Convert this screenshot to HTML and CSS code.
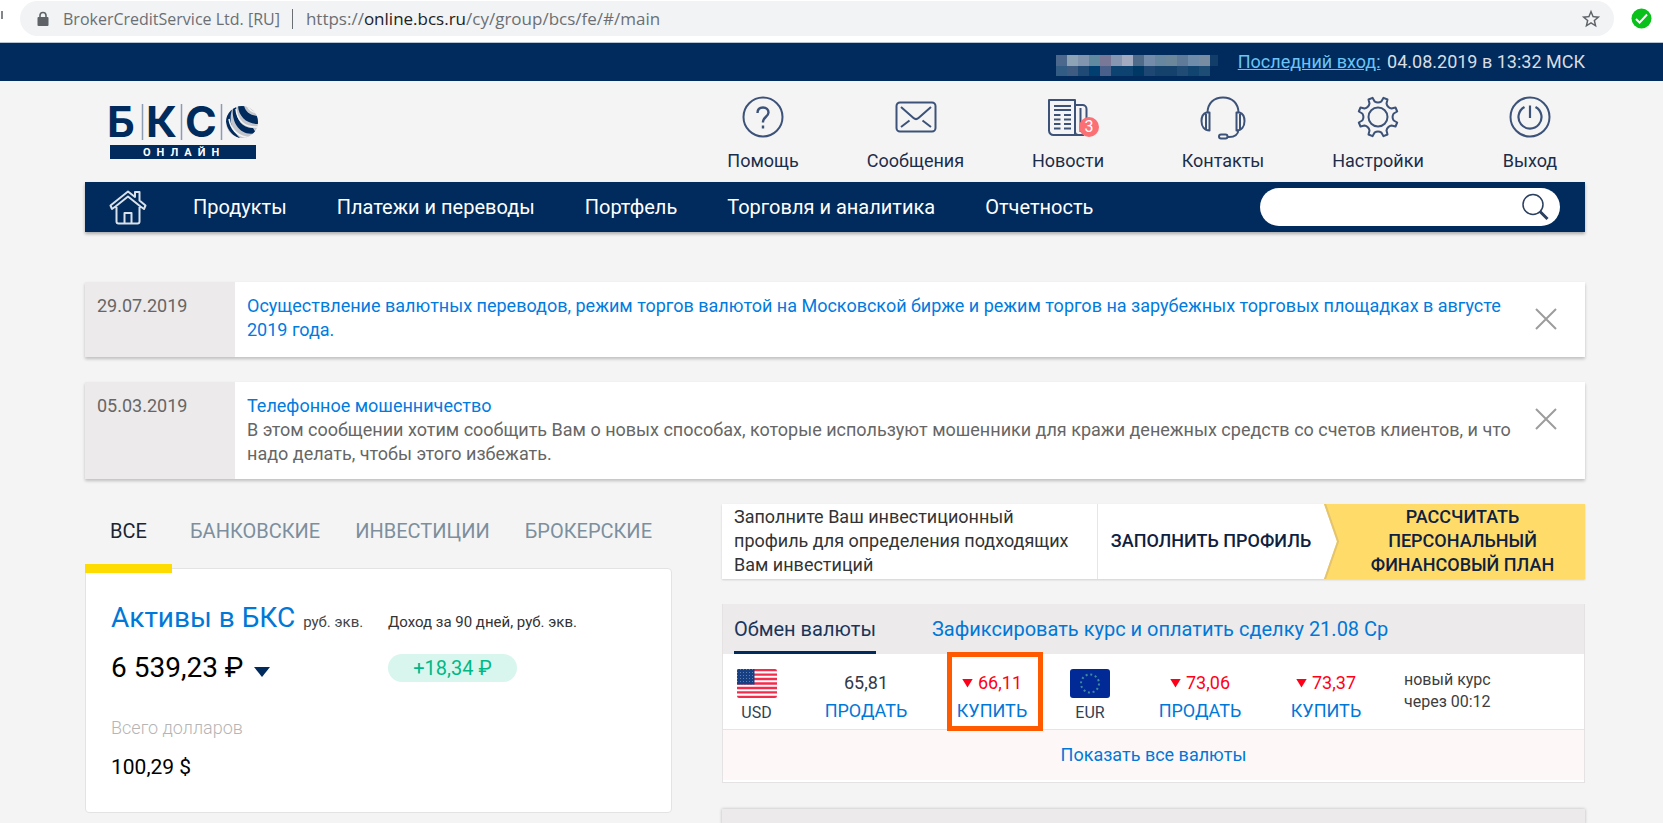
FILE: index.html
```html
<!DOCTYPE html>
<html lang="ru">
<head>
<meta charset="utf-8">
<title>БКС Онлайн</title>
<link rel="stylesheet" href="styles.css">
</head>
<body>
<div class="browser">
  <span class="browser-reload"></span>
  <div class="omnibox">
    <svg class="lock" viewBox="0 0 12 16" width="12" height="16" aria-hidden="true"><path d="M3 7V4.500a3 3 0 0 1 6 0V7" fill="none" stroke="#5f6368" stroke-width="1.600"/><rect x="0.500" y="6" width="11" height="9" rx="1" fill="#5f6368"/></svg>
    <span class="owner">BrokerCreditService Ltd. [RU]</span>
    <span class="divider"></span>
    <span class="url">https://<b>online.bcs.ru</b>/cy/group/bcs/fe/#/main</span>
    <svg class="star" viewBox="0 0 24 24" width="22" height="22" aria-hidden="true"><path d="M22 9.240l-7.190-.62L12 2 9.190 8.630 2 9.240l5.460 4.730L5.820 21 12 17.270 18.180 21l-1.630-7.030L22 9.240zM12 15.400l-3.760 2.270 1-4.280-3.320-2.880 4.380-.38L12 6.100l1.710 4.040 4.380.38-3.320 2.880 1 4.280L12 15.400z" fill="#5f6368"/></svg>
  </div>
  <svg class="shield" viewBox="0 0 21 21" width="21" height="21" aria-hidden="true"><circle cx="10.500" cy="10.500" r="10" fill="#0ac11c"/><path d="M5 11l3.600 3.600L16 6.500" fill="none" stroke="#fff" stroke-width="2"/></svg>
</div>

<div class="topbar">
  <div class="wrap topbar-row">
    <svg class="mosaic" viewBox="0 0 162 21" width="162" height="21" aria-hidden="true" shape-rendering="crispEdges">
      <g><rect width="11" height="11" fill="#4c688c"/><rect x="11" width="11" height="11" fill="#8da3b6"/><rect x="22" width="11" height="11" fill="#8196ae"/><rect x="33" width="11" height="11" fill="#608a9f"/><rect x="44" width="11" height="11" fill="#7a7897"/><rect x="55" width="11" height="11" fill="#8797b1"/><rect x="66" width="11" height="11" fill="#a3abc1"/><rect x="77" width="11" height="11" fill="#506a8a"/><rect x="88" width="11" height="11" fill="#748ba9"/><rect x="99" width="11" height="11" fill="#67869f"/><rect x="110" width="11" height="11" fill="#6b8799"/><rect x="121" width="11" height="11" fill="#607b99"/><rect x="132" width="11" height="11" fill="#6f8cab"/><rect x="143" width="11" height="11" fill="#798da2"/><rect x="154" width="8" height="11" fill="#123d68"/></g>
      <g><rect y="11" width="11" height="10" fill="#325c83"/><rect x="11" y="11" width="11" height="10" fill="#3e5c82"/><rect x="22" y="11" width="11" height="10" fill="#1f4a75"/><rect x="33" y="11" width="11" height="10" fill="#003f70"/><rect x="44" y="11" width="11" height="10" fill="#48608a"/><rect x="55" y="11" width="22" height="10" fill="#0c4370"/><rect x="77" y="11" width="11" height="10" fill="#003865"/><rect x="88" y="11" width="11" height="10" fill="#1e4774"/><rect x="99" y="11" width="22" height="10" fill="#15426c"/><rect x="121" y="11" width="11" height="10" fill="#1f4b75"/><rect x="132" y="11" width="11" height="10" fill="#11446e"/><rect x="143" y="11" width="11" height="10" fill="#1d4c75"/></g>
    </svg>
    <span class="last-login"><a href="#">Последний вход:</a> 04.08.2019 в 13:32 МСК</span>
  </div>
</div>

<header class="wrap header">
  <a class="logo" href="#" aria-label="БКС Онлайн">
    <svg viewBox="0 0 150 58" width="150" height="58">
      <g class="logo-letters"><text x="-3" y="34">Б</text><text x="36" y="34">К</text><text x="75" y="34">С</text></g>
      <path d="M32.500 1v36M71.500 1v36M111.500 1v36" stroke="#8b9cb3" stroke-width="1.500"/>
      <defs><clipPath id="globe"><circle cx="132" cy="19" r="16"/></clipPath></defs>
      <g clip-path="url(#globe)">
        <rect x="115" y="2" width="34" height="34" fill="#c3c7cd"/>
        <path d="M119 6C112 16 117 32 131 36C121 27 118 16 123 4Z" fill="#002b5c"/>
        <path d="M123 5C121 20 131 34 146 30L143 25C132 25 126 17 126 4Z" fill="#002b5c"/>
        <path d="M128 2C128 13 137 22 150 21L149 13C141 13 135 9 134 2Z" fill="#002b5c"/>
        <path d="M126 6C127 17 134 25 148 24M137 2C139 7 143 10 149 10M119 16C121 27 128 34 141 35" fill="none" stroke="#f4f4f4" stroke-width="1.500"/>
      </g>
      <rect x="0" y="42" width="146" height="14" fill="#002b5c"/>
      <text class="logo-sub" x="33" y="53">ОНЛАЙН</text>
    </svg>
  </a>
  <nav class="tools" aria-label="Сервис">
    <a href="#"><svg class="line" viewBox="0 0 48 44" width="48" height="44" aria-hidden="true"><circle cx="24" cy="21" r="19.500"/><path d="M18.500 17c0-3.500 2.200-5.500 5.500-5.500s5.500 2 5.500 5c0 4-5.500 5-5.500 9v1M24 29.500v3" stroke-width="2.400"/></svg>Помощь</a>
    <a href="#"><svg class="line" viewBox="0 0 48 44" width="48" height="44" aria-hidden="true"><rect x="4.500" y="6.500" width="39" height="29" rx="3.500"/><path d="M9 11l12.500 11c1.700 1.500 3.300 1.500 5 0L39 11M9 31l8.500-6.500M39 31l-8.500-6.500"/></svg>Сообщения</a>
    <a class="news" href="#"><svg class="line" viewBox="0 0 48 44" width="48" height="44" aria-hidden="true"><path d="M5 4h26v35H9.500A4.500 4.500 0 0 1 5 34.500zM31 9h7.500a4 4 0 0 1 4 4v24M31 35.500c0 2 1.500 3.500 3.500 3.500H40M36.500 12v24M31 39h8"/><path d="M10 10h17M10 14h17M10 19h6.500M10 23.500h6.500M10 28h6.500M10 32.500h6.500M20 19h7M20 23.500h7M20 28h7M20 32.500h7" stroke-width="2.200"/></svg><span class="badge">3</span>Новости</a>
    <a href="#"><svg class="line" viewBox="0 0 48 44" width="48" height="44" aria-hidden="true"><path d="M8.500 17C8.500 7 15 1.500 24 1.500S39.500 7 39.500 17M10.500 16.500v18c-5 0-8-4-8-9.500 0-4 2-7.500 5-8.500zM37.500 16.500v18c5 0 8-4 8-9.500 0-4-2-7.500-5-8.500zM7 18v15M41 18v15M39.500 34c-.5 5-4 7-9.500 7h-2"/><rect x="20" y="38.500" width="8.500" height="4" rx="2"/></svg>Контакты</a>
    <a href="#"><svg class="line" viewBox="0 0 48 44" width="48" height="44" aria-hidden="true"><circle cx="24" cy="21" r="9.500"/><path d="M18.500 1.800L20.500 5.300C22.500 6.600 25.500 6.600 27.500 5.300L29.500 1.800L33.500 3.500L32.500 7.500C33 10 35 12 37.500 12.500L41.500 11.500L43.200 15.500L39.700 17.500C38.400 19.500 38.400 22.500 39.700 24.500L43.200 26.500L41.500 30.500L37.500 29.500C35 30 33 32 32.500 34.500L33.500 38.500L29.500 40.200L27.500 36.700C25.500 35.400 22.500 35.400 20.500 36.700L18.500 40.200L14.500 38.500L15.500 34.500C15 32 13 30 10.500 29.500L6.500 30.500L4.800 26.500L8.300 24.500C9.600 22.500 9.600 19.500 8.300 17.500L4.800 15.500L6.500 11.500L10.500 12.500C13 12 15 10 15.500 7.500L14.500 3.500Z"/></svg>Настройки</a>
    <a href="#"><svg class="line" viewBox="0 0 48 44" width="48" height="44" aria-hidden="true"><circle cx="24" cy="21" r="19.500"/><path d="M24 9.500v12.500M18.500 11a11.500 11.500 0 1 0 11 0" stroke-width="2.200"/></svg>Выход</a>
  </nav>
</header>

<nav class="wrap mainnav" aria-label="Основное меню">
  <a class="home" href="#" aria-label="Главная"><svg viewBox="0 0 38 36" width="38" height="36" fill="none" stroke="#d9e1ea" stroke-width="2" stroke-linejoin="round" aria-hidden="true"><path d="M6.500 17.500L3 20 1.500 16.500 19 2.500l7 5.500V3h4.500v8.500l6 5L35 20l-3.500-2.500M6.500 17.500L19 7.500l12.500 10M7.500 18v14.500a2 2 0 0 0 2 2h19a2 2 0 0 0 2-2V18M15.500 34V24h7v10"/></svg></a>
  <a href="#">Продукты</a>
  <a href="#">Платежи и переводы</a>
  <a href="#">Портфель</a>
  <a href="#">Торговля и аналитика</a>
  <a href="#">Отчетность</a>
  <form class="search">
    <input type="search" aria-label="Поиск">
    <button type="button" aria-label="Найти"><svg viewBox="0 0 28 28" width="28" height="28" fill="none" stroke="#2b3f5f" aria-hidden="true"><circle cx="12" cy="11.500" r="10" stroke-width="1.500"/><path d="M19 18.500l7.500 7.500" stroke-width="3"/></svg></button>
  </form>
</nav>

<main class="wrap">
  <section class="notices">
    <article class="notice">
      <time class="notice-date">29.07.2019</time>
      <div class="notice-text"><a href="#">Осуществление валютных переводов, режим торгов валютой на Московской бирже и режим торгов на зарубежных торговых площадках в августе 2019 года.</a></div>
      <button class="close" aria-label="Закрыть"><svg viewBox="0 0 22 22" width="22" height="22" aria-hidden="true"><path d="M1 1l20 20M21 1L1 21" stroke="#9c9c9c" stroke-width="2"/></svg></button>
    </article>
    <article class="notice">
      <time class="notice-date">05.03.2019</time>
      <div class="notice-text"><a href="#">Телефонное мошенничество</a><p>В этом сообщении хотим сообщить Вам о новых способах, которые используют мошенники для кражи денежных средств со счетов клиентов, и что надо делать, чтобы этого избежать.</p></div>
      <button class="close" aria-label="Закрыть"><svg viewBox="0 0 22 22" width="22" height="22" aria-hidden="true"><path d="M1 1l20 20M21 1L1 21" stroke="#9c9c9c" stroke-width="2"/></svg></button>
    </article>
  </section>

  <div class="columns">
    <section class="assets">
      <div class="tabs">
        <button class="tab active">ВСЕ</button>
        <button class="tab">БАНКОВСКИЕ</button>
        <button class="tab">ИНВЕСТИЦИИ</button>
        <button class="tab">БРОКЕРСКИЕ</button>
      </div>
      <div class="card">
        <div class="card-title"><a href="#">Активы в БКС</a><small>руб. экв.</small></div>
        <div class="income-label">Доход за 90 дней, руб. экв.</div>
        <div class="total">6 539,23 ₽<svg viewBox="0 0 16 10" width="16" height="10" aria-hidden="true"><path d="M0 0h16L8 10z" fill="#002b5c"/></svg></div>
        <div class="income">+18,34 ₽</div>
        <div class="sub-label">Всего долларов</div>
        <div class="sub-value">100,29 $</div>
      </div>
    </section>

    <div class="side">
      <section class="profile">
        <p>Заполните Ваш инвестиционный профиль для определения подходящих Вам инвестиций</p>
        <a class="fill" href="#">ЗАПОЛНИТЬ ПРОФИЛЬ</a>
        <a class="plan" href="#">РАССЧИТАТЬ ПЕРСОНАЛЬНЫЙ ФИНАНСОВЫЙ ПЛАН<svg class="plan-edge" viewBox="0 0 13 75" preserveAspectRatio="none" aria-hidden="true"><path d="M0 0L13 37.500L0 75" fill="none" stroke="#e3c470" stroke-width="4"/></svg></a>
      </section>

      <section class="exchange">
        <div class="exchange-head">
          <span class="exchange-tab">Обмен валюты</span>
          <a href="#">Зафиксировать курс и оплатить сделку 21.08 Ср</a>
        </div>
        <div class="rates">
          <div class="currency"><svg viewBox="0 0 40 29" width="40" height="29" aria-hidden="true"><defs><clipPath id="flag"><rect width="40" height="29" rx="2"/></clipPath><pattern id="stars" width="3" height="3" patternUnits="userSpaceOnUse"><rect width="1" height="1" fill="#5f7fae"/></pattern></defs><g clip-path="url(#flag)"><rect width="40" height="29" fill="#fff"/><path d="M0 1.200h40M0 5.600h40M0 10h40M0 14.500h40M0 19h40M0 23.400h40M0 27.800h40" stroke="#f42c4c" stroke-width="2.300"/><rect width="17.500" height="15.500" fill="#173f83"/><rect width="17.500" height="15.500" fill="url(#stars)"/></g></svg>USD</div>
          <div class="rate"><span>65,81</span><a href="#">ПРОДАТЬ</a></div>
          <div class="rate fall marked"><span>66,11</span><a href="#">КУПИТЬ</a></div>
          <div class="currency eur"><svg viewBox="0 0 40 29" width="40" height="29" aria-hidden="true"><rect width="40" height="29" rx="3" fill="#012a97"/><circle cx="20" cy="14.500" r="9" fill="none" stroke="#3f8a9e" stroke-width="2" stroke-dasharray="2 2.712"/></svg>EUR</div>
          <div class="rate fall"><span>73,06</span><a href="#">ПРОДАТЬ</a></div>
          <div class="rate fall"><span>73,37</span><a href="#">КУПИТЬ</a></div>
          <div class="timer">новый курс<br>через 00:12</div>
        </div>
        <div class="show-all"><a href="#">Показать все валюты</a></div>
      </section>

      <section class="next-block"></section>
    </div>
  </div>
</main>
</body>
</html>
```
FILE: styles.css
```css
* { box-sizing: border-box; }

body {
  margin: 0;
  background: #f4f4f4;
  color: #333;
  font: 18px/24px Roboto, "Liberation Sans", sans-serif;
}

a { color: #0078d7; text-decoration: none; }
p { margin: 0; }
svg { display: block; flex: none; }
button { padding: 0; border: 0; background: none; color: inherit; font: inherit; cursor: pointer; }

.wrap { margin: 0 78px 0 85px; }

/* Browser toolbar */
.browser {
  display: flex;
  align-items: center;
  gap: 17px;
  height: 43px;
  padding: 0 11px 5px 0;
  background: #fff;
  border-bottom: 1px solid #b6c3d2;
}
.browser-reload { width: 3px; height: 8px; margin-bottom: 8px; border-right: 2px solid #80868b; }
.omnibox {
  flex: 1;
  display: flex;
  align-items: center;
  height: 35px;
  padding: 0 12px 0 17px;
  border-radius: 18px;
  background: #f1f3f4;
  color: #6b6f74;
  font: 17px/24px "Open Sans", "Noto Sans", sans-serif;
}
.owner { margin-left: 14px; font-size: 16px; }
.divider { width: 1px; height: 20px; margin: 0 13px 0 12px; background: #6b6f74; }
.url b { color: #202124; font-weight: 400; }
.star { margin-left: auto; }

/* Navy strip */
.topbar { background: #002b5c; }
.topbar-row { display: flex; justify-content: flex-end; align-items: center; gap: 20px; height: 38px; color: #d9dde3; }
.mosaic { margin-top: 7px; }
.last-login a { margin-right: 2px; color: #6cc3f7; text-decoration: underline; }

/* Header */
.header { display: flex; justify-content: space-between; padding: 15px 0 9px 25px; }
.logo { margin-top: 7px; }
.logo svg { overflow: visible; }
.logo-letters { fill: #002b5c; font: 700 43px/1 Inter, Roboto, sans-serif; }
.logo-sub { fill: #fff; font: 700 11px Roboto, sans-serif; letter-spacing: 6px; }
.tools { display: grid; grid-template-columns: 110px 111px 110px 116px 110px 110px; column-gap: 42px; }
.tools a { position: relative; display: flex; flex-direction: column; align-items: center; gap: 9px; color: #1c2d4a; }
.line { fill: none; stroke: #3c5278; stroke-width: 2; stroke-linejoin: round; }
.badge {
  position: absolute;
  left: 66px;
  top: 21px;
  width: 20px;
  height: 20px;
  border-radius: 50%;
  background: #fb7074;
  color: #fff;
  font-size: 16px;
  line-height: 20px;
  text-align: center;
}

/* Main menu */
.mainnav {
  display: flex;
  align-items: center;
  gap: 50px;
  height: 50px;
  padding: 0 25px 0 24px;
  background: #002b5c;
  box-shadow: 0 2px 3px rgba(0, 0, 0, .3);
  font-size: 20px;
}
.mainnav a { color: #fff; }
.mainnav .home { margin-right: -4px; }
.search { display: flex; align-items: center; width: 300px; height: 38px; margin-left: auto; padding: 0 11px 0 18px; border-radius: 19px; background: #fff; }
.search input { flex: 1; min-width: 0; height: 30px; padding: 0; border: 0; outline: 0; background: none; font: inherit; }

/* Notices */
.notices { display: grid; gap: 25px; padding: 50px 0 25px; }
.notice { display: flex; min-height: 75px; background: #fff; box-shadow: 0 2px 3px rgba(0, 0, 0, .22); }
.notice a { color: #007be0; }
.notice-date { flex: none; width: 150px; padding: 12px; background: #eceaeb; color: #666; }
.notice-text { flex: 1; padding: 12px 0 13px 12px; color: #666; }
.close { align-self: flex-start; width: 66px; padding: 26px 28px 0 16px; }

/* Columns */
.columns { display: grid; grid-template-columns: 587fr 863fr; gap: 50px; }

.tabs { display: flex; gap: 35px; height: 64px; }
.tab { position: relative; height: 64px; padding-bottom: 10px; color: #7d8f9d; font-size: 20px; }
.tab.active { width: 87px; margin-right: -17px; color: #1a2433; }
.tab.active::after { content: ""; position: absolute; left: 0; right: 0; bottom: -5px; height: 9px; background: #ffdc00; }
.card {
  display: grid;
  grid-template-columns: 277px 1fr;
  align-items: baseline;
  padding: 29px 24px 33px 25px;
  border: 1px solid #e3e3e3;
  border-radius: 4px;
  background: #fff;
}
.card-title { font-size: 28px; line-height: 40px; }
.card-title small { margin-left: 8px; color: #444; font-size: 15px; }
.income-label { color: #333; font-size: 15px; }
.total { display: flex; align-items: center; gap: 11px; margin-top: 6px; color: #000; font-size: 28px; line-height: 40px; }
.total svg { margin-top: 8px; }
.income { justify-self: start; align-self: center; width: 129px; margin-top: 6px; border-radius: 14px; background: #d8f6ee; color: #00b887; font-size: 20px; line-height: 28px; text-align: center; }
.sub-label { grid-column: 1 / -1; margin-top: 28px; color: #b5b5b5; font-size: 18px; font-weight: 300; }
.sub-value { grid-column: 1 / -1; margin-top: 15px; color: #000; font-size: 21px; }

/* Investment profile */
.profile { display: grid; grid-template-columns: 376fr 226fr 261fr; background: #fff; box-shadow: 0 1px 2px rgba(0, 0, 0, .15); }
.profile p { padding: 1px 12px 2px; color: #333; border-right: 1px solid #e6e6e6; }
.profile a { display: flex; align-items: center; justify-content: center; padding-bottom: 2px; color: #0f2140; text-align: center; font-weight: 500; }
.profile .plan { position: relative; padding: 0 24px 2px 40px; background: #ffdc6a; clip-path: polygon(0 0, 100% 0, 100% 100%, 0 100%, 13px 50%); }
.plan-edge { position: absolute; left: 0; top: 0; width: 13px; height: 100%; overflow: visible; }

/* Exchange */
.exchange { margin-top: 25px; border: 1px solid #e4e2e2; border-top: 0; }
.exchange-head { display: flex; gap: 56px; padding: 0 11px; background: #eceaeb; font-size: 20px; }
.exchange-tab { padding: 13px 0 10px; border-bottom: 3px solid #002b5c; color: #1c3557; }
.exchange-head a { padding-top: 13px; }
.rates { display: grid; grid-template-columns: 67fr 152fr 100fr 82fr 152fr 100fr 208fr; height: 75px; background: #fff; }
.currency { display: flex; flex-direction: column; align-items: center; gap: 3px; padding-top: 15px; font-size: 16px; color: #333f52; }
.currency.eur { padding-left: 14px; }
.rate { position: relative; display: flex; flex-direction: column; align-items: center; gap: 4px; padding-top: 17px; color: #2e3a4b; }
.rate.fall { color: #ff0019; }
.rate.fall span { display: flex; align-items: center; gap: 5px; }
.rate.fall span::before { content: ""; width: 11px; height: 9px; background: #ff0019; clip-path: polygon(0 0, 100% 0, 50% 100%); }
.rate.marked::after { content: ""; position: absolute; inset: -2px -1px -2px 5px; border: 5px solid #ff5a00; }
.timer { padding: 15px 0 0 28px; color: #3d3d3d; font-size: 16px; line-height: 22px; }
.show-all { padding: 13px 0; border-top: 1px solid #e8e4e4; border-bottom: 2px solid #fff; background: #fdf7f7; text-align: center; }

.next-block { height: 15px; margin-top: 26px; background: #eceaeb; box-shadow: 0 0 3px rgba(0, 0, 0, .25); }
```
